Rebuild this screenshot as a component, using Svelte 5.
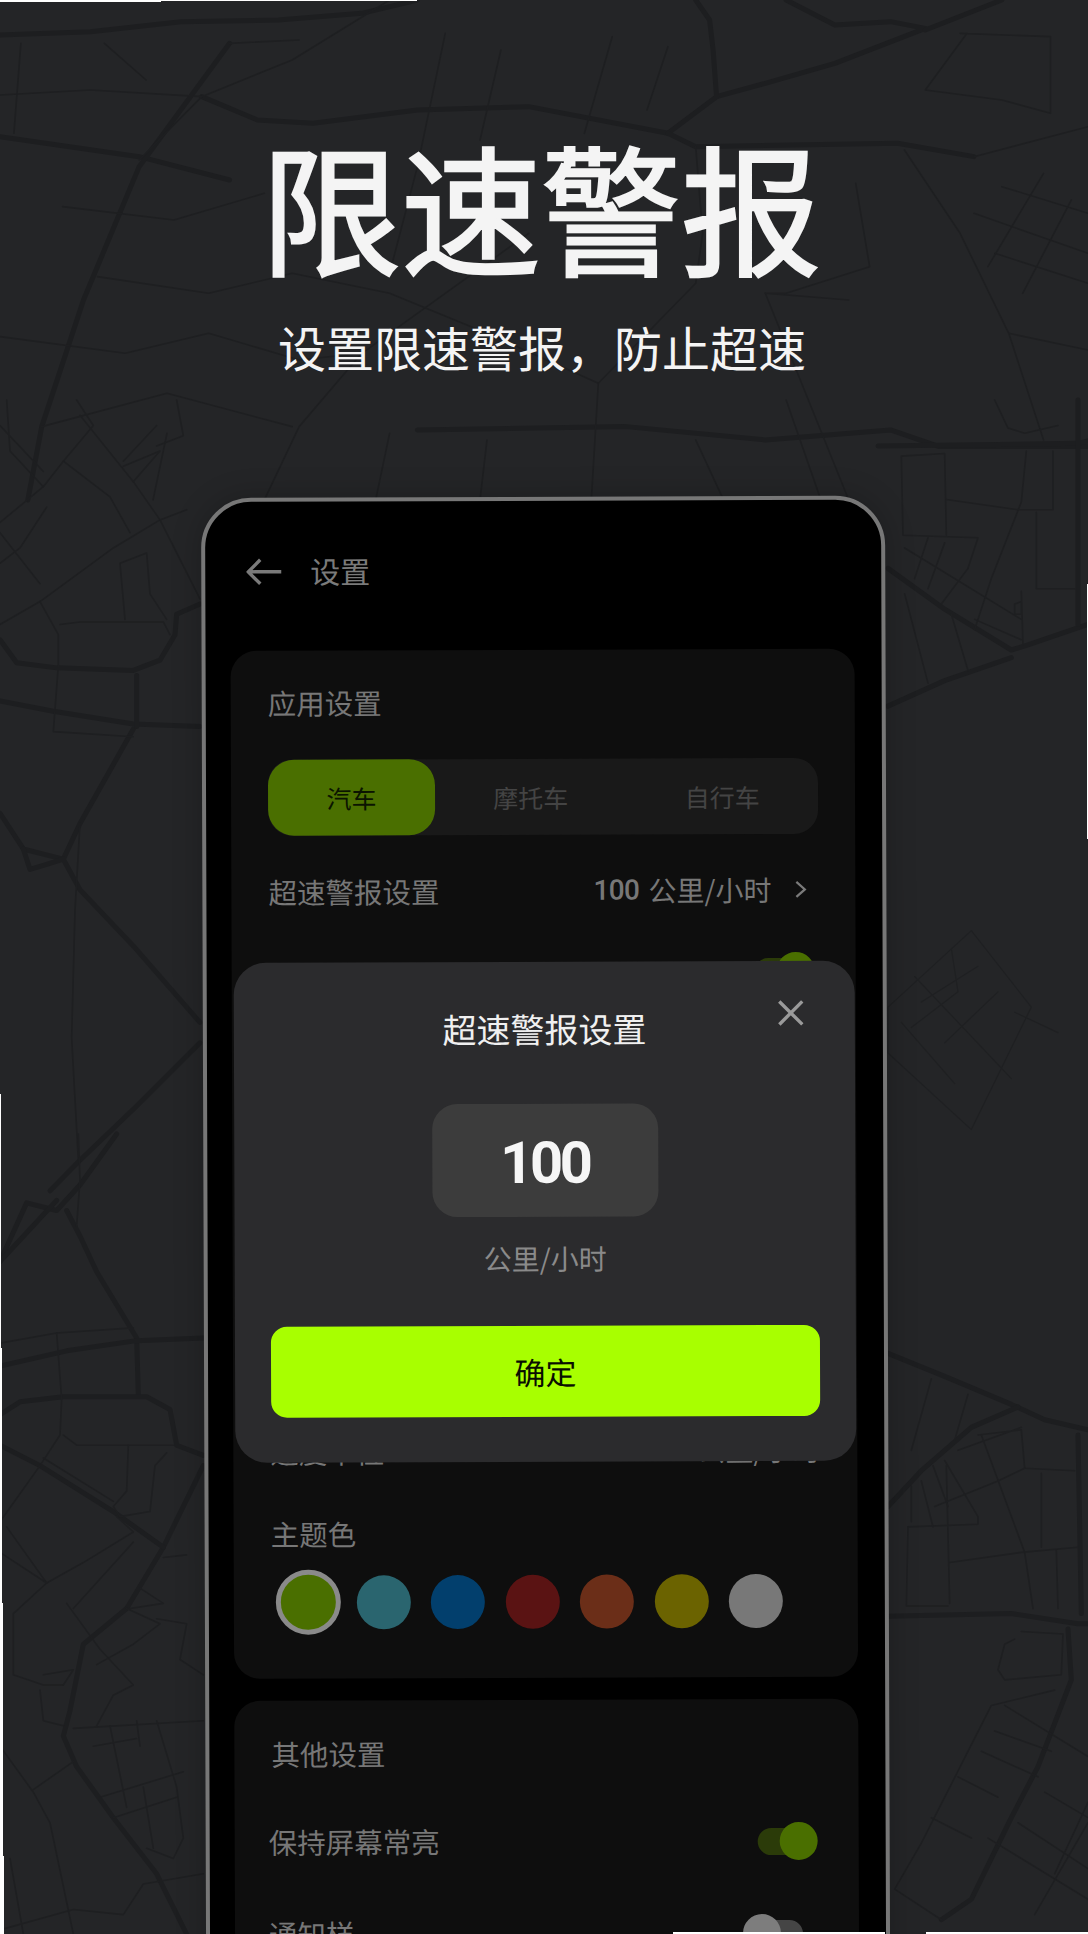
<script lang="ts">
  // swatches in the theme colour row, the first one is selected
  const swatches = ['#4a6f00', '#2a656f', '#023f6d', '#5a1313', '#6b2e18', '#6b6300', '#787878'];

  // road traces, read off separate crops: each group has its own scale
  const maps = [
    {
      t: 'scale(0.6957 0.3333)',
      thick: [
        'M0,105 L130,95 L260,65 L400,60 L520,40 L600,0',
        'M1130,0 L1200,75 L1280,65 L1330,85 L1200,190 L1100,250 L1030,290',
        'M1330,90 L1440,0',
        'M1000,0 L1020,60 L1025,150 L1030,290 L960,400 L760,320 L600,330 L450,370 L370,360 L290,290',
        'M0,410 L200,470 L330,540',
        'M960,400 L1000,440 L1290,430 L1400,470',
        'M600,1290 L900,1280 L1100,1320 L1280,1290 L1350,1340 L1564,1340',
        'M330,130 L200,500 L120,900 L60,1280 L40,1500'
      ],
      thin: [
        'M560,0 L420,180 L290,290 L200,480',
        'M0,285 L130,270 L290,290',
        'M30,130 L20,400 M150,130 L210,240 M330,130 L430,120',
        'M850,1500 L860,1150 L1000,850 L1010,700 L1000,440',
        'M380,1500 L430,1280 L520,1060 L640,880 L760,700',
        'M1130,1200 L1180,1500 M1100,880 L1220,1500',
        'M1300,450 L1380,700 L1450,1000 L1500,1320',
        'M1380,100 L1510,110 L1510,340 M1390,100 L1330,270 L1440,300 L1510,340',
        'M1400,470 L1564,380 M1440,560 L1564,640 M1400,640 L1564,760 M1430,760 L1564,850',
        'M1500,520 L1420,800 M1540,600 L1470,880 M1450,1000 L1564,1050',
        'M640,100 L600,500 L560,820 M720,150 L690,420 M880,110 L840,400 M960,140 L930,330',
        'M90,620 L250,660 L380,580 M140,830 L300,880 L420,820 L560,880 L700,1000 L860,1150',
        'M0,1010 L180,1060 L300,1000 L430,1080 L520,1060 M60,1280 L240,1180 L420,1280',
        'M1230,550 L1250,800 L1130,880 L1100,880 L1220,900',
        'M240,1300 L220,1500 M560,1300 L540,1500 M700,1320 L690,1500 M1000,1320 L1040,1500'
      ]
    },
    {
      t: 'translate(0 400) scale(0.3333 0.5102)',
      thick: [
        'M0,470 L50,515 L170,525 L400,530 L480,510 L525,460 L530,420 L600,400',
        'M0,590 L160,610 L400,635 L600,640',
        'M400,645 L240,830 L190,900 L130,890 L70,880 L0,810',
        'M70,880 L90,920 L140,910 L190,900 L240,960 L400,1070 L600,1220',
        'M600,1260 L400,1390 L240,1490 L150,1550',
        'M410,540 L410,640'
      ],
      thin: [
        'M0,440 L120,395 L340,290 L480,235',
        'M120,395 L175,460 L175,520 L160,650 L400,660',
        'M240,830 L225,1000 L215,1250 L235,1490',
        'M0,240 L130,170 L190,120 L330,190 L390,260',
        'M190,120 L280,50 L230,0',
        'M240,30 L400,160 L480,235 L600,390',
        'M0,320 L60,290 L140,210 M0,260 L120,360',
        'M360,320 L375,430 M360,320 L440,300 L450,380 L500,430',
        'M480,235 L560,215 M370,130 L480,100 L400,160',
        'M180,440 L240,435 L490,435 L510,460',
        'M0,50 L130,140 M20,0 L30,100 L130,170',
        'M470,50 L370,120 M530,0 L550,70 L470,90'
      ]
    },
    {
      t: 'translate(0 1134) scale(0.3333 0.5102)',
      thick: [
        'M0,250 L80,135 L170,150 L240,100 L350,0',
        'M0,250 L170,130',
        'M200,150 L240,200 L290,270 L410,400 L415,510',
        'M0,455 L200,425 L410,405 L610,400',
        'M0,550 L60,525 L190,515 L440,515 L510,540 L530,610 L610,630',
        'M610,650 L490,810 L380,930 L250,1000 L210,1130 L190,1180 L230,1240 L340,1340 L470,1450 L560,1568',
        'M0,610 L120,650 L340,740 L490,810'
      ],
      thin: [
        'M235,0 L240,90 L230,180',
        'M0,410 L170,390 L400,380',
        'M170,390 L185,520 L180,590 L120,650',
        'M190,590 L230,610 L520,610',
        'M385,610 L380,700 L340,730 L360,750 L450,740 L465,650 L500,625',
        'M130,635 L340,720 M120,650 L0,760',
        'M20,770 L140,880 L250,840 L400,780 L350,750',
        'M140,880 L40,940 L40,1060 L130,1080 L190,1080 M0,820 L140,880',
        'M220,930 L400,800',
        'M200,920 L300,1010 L400,1080 L340,1100 L290,1160',
        'M220,1165 L610,1150',
        'M330,1160 L380,1320 M410,1150 L420,1200 M280,1200 L410,1185',
        'M470,1150 L530,1280 L550,1380 L520,1420 L440,1400 M430,1280 L460,1400',
        'M300,1300 L550,1250 M340,1340 L530,1300',
        'M0,1200 L100,1290 L150,1350 L220,1568 M100,1285 L220,1230',
        'M30,1420 L70,1568 M0,1560 L220,1520 L370,1530 L430,1470 L610,1450',
        'M120,1090 L130,1150 L190,1160 M130,1060 L220,1050 L190,1080',
        'M470,950 L560,960 L540,1030 L610,1060',
        'M380,930 L480,960 L400,1000 L290,1040',
        'M420,890 L490,920 L390,930 M490,830 L560,825'
      ]
    },
    {
      t: 'translate(878 400) scale(0.3333 0.5102)',
      thick: [
        'M0,90 L600,85 L630,80',
        'M30,330 L200,410 L400,490 L450,480 L630,440',
        'M30,600 L200,550 L400,505',
        'M600,0 L600,440'
      ],
      thin: [
        'M350,0 L390,55 L440,65 L540,50',
        'M445,100 L430,200 L340,350 L290,450',
        'M70,110 L200,105 L205,265 M70,110 L75,265 L300,270 L270,330',
        'M205,195 L420,215 L525,215 M525,100 L525,215',
        'M475,220 L475,370 L590,370',
        'M80,290 L430,430 M150,270 L110,350 M200,280 L150,370 M270,330 L190,400',
        'M220,420 L270,530 M80,380 L150,555 M290,430 L430,470',
        'M430,375 L435,480 M410,400 L430,395 L430,420 L410,420 Z'
      ]
    },
    {
      t: 'translate(878 1134) scale(0.3333 0.5102)',
      thick: [
        'M30,430 L200,475 L400,530 L500,560 L630,580',
        'M30,730 L130,660 L280,575 L420,535',
        'M30,945 L400,940 L600,960 L630,960',
        'M600,590 L610,940',
        'M570,970 L580,1070 L480,1240 L400,1340 L280,1500 L190,1540'
      ],
      thin: [
        'M160,480 L100,620 M270,510 L230,600',
        'M300,590 L430,580 L440,655 L590,660 M240,620 L430,575',
        'M310,590 L440,820 L465,930',
        'M490,665 L490,810 M215,840 L430,820 L600,810',
        'M205,650 L215,920 M90,770 L300,765 L300,750 L200,640',
        'M130,680 L165,770 M165,650 L210,730 M100,690 L100,760',
        'M90,770 L85,925 L210,925',
        'M170,730 L360,680 L440,655',
        'M190,1540 L50,1480 L130,1390 L340,1120 L530,1090',
        'M410,990 L380,1000 L360,1050 L380,1070 L550,1060 L555,980 L430,975',
        'M540,930 L535,815',
        'M350,1170 L520,1210 M310,1210 L480,1260 M240,1260 L360,1300',
        'M160,1340 L280,1380 M330,1380 L630,1500 M420,1350 L630,1440 M500,1290 L630,1340',
        'M380,1120 L630,1220 M530,1450 L630,1310 M470,1530 L630,1350'
      ]
    }
  ];

  // faint block on the right of the phone
  const faint = 'M30,1190 L280,1040 L460,1190 L280,1430 L30,1280 Z M110,1130 L400,1330 M220,1075 L240,1160 L100,1230 M70,1220 L230,1340 M300,1110 L130,1180 M360,1160 L200,1260 M410,1200 L540,1240';

  // thin white slivers along the picture's edges
  const edges = [
    { x: 0, y: 0, w: 161, h: 2 },
    { x: 161, y: 0, w: 256, h: 1 },
    { x: 0, y: 1094, w: 1, h: 254 },
    { x: 0, y: 1348, w: 2, h: 255 },
    { x: 0, y: 1603, w: 3, h: 253 },
    { x: 0, y: 1856, w: 4, h: 78 },
    { x: 1087, y: 584, w: 1, h: 255 },
    { x: 673, y: 1932, w: 212, h: 2 },
    { x: 926, y: 1932, w: 162, h: 2 }
  ];
</script>

<div class="page">
  <svg class="map" width="1088" height="1934" viewBox="0 0 1088 1934" fill="none">
    {#each maps as m}
      <g transform={m.t}>
        {#each m.thick as d}
          <path {d} class="road thick" />
        {/each}
        {#each m.thin as d}
          <path {d} class="road thin" />
        {/each}
      </g>
    {/each}
    <g transform="translate(878 400) scale(0.3333 0.5102)">
      <path d={faint} class="road faint" />
    </g>
  </svg>

  <header class="hero">
    <h1>限速警报</h1>
    <p>设置限速警报，防止超速</p>
  </header>

  <div class="phone">
    <div class="topbar">
      <svg width="36" height="28" viewBox="0 0 36 28" fill="none" stroke="#7a7a7a" stroke-width="3.4">
        <path d="M14,2 L2,14 L14,26 M2,14 H35" />
      </svg>
      <span>设置</span>
    </div>

    <section class="card first">
      <div class="card-title">应用设置</div>
      <div class="segment">
        <div class="tab on">汽车</div>
        <div class="tab">摩托车</div>
        <div class="tab">自行车</div>
      </div>
      <div class="row first-row">
        <span>超速警报设置</span>
        <span class="value">
          <b>100</b><span>公里/小时</span>
          <svg width="13" height="19" viewBox="0 0 13 19" fill="none" stroke="#7a7a7a" stroke-width="2.2">
            <path d="M2,2 L10.5,9.5 L2,17" />
          </svg>
        </span>
      </div>
      <div class="row">
        <span></span>
        <div class="toggle"><i></i><em></em></div>
      </div>
      <div class="hidden-rows"></div>
      <div class="row">
        <span>速度单位</span>
        <span class="value">公里/小时</span>
      </div>
      <div class="card-title theme">主题色</div>
      <div class="swatches">
        {#each swatches as c, i}
          <div class="dot" class:picked={i === 0} style="background: {c}"></div>
        {/each}
      </div>
    </section>

    <section class="card second">
      <div class="card-title">其他设置</div>
      <div class="row tall">
        <span class="nudge">保持屏幕常亮</span>
        <div class="toggle"><i></i><em></em></div>
      </div>
      <div class="row tall">
        <span class="nudge">通知样</span>
        <div class="toggle off"><i></i><em></em></div>
      </div>
    </section>

    <div class="modal">
      <button class="close" aria-label="关闭">
        <svg width="26" height="26" viewBox="0 0 26 26" stroke="#9a9a9a" stroke-width="3.4">
          <path d="M1.5,1.5 L24.5,24.5 M24.5,1.5 L1.5,24.5" />
        </svg>
      </button>
      <div class="modal-title">超速警报设置</div>
      <div class="speed">100</div>
      <div class="unit">公里/小时</div>
      <button class="confirm">确定</button>
    </div>
  </div>

  {#each edges as e}
    <div class="edge" style="left: {e.x}px; top: {e.y}px; width: {e.w}px; height: {e.h}px"></div>
  {/each}
</div>

<style>
  :global(body) {
    margin: 0;
    background: #242527;
  }

  .page {
    position: relative;
    width: 1088px;
    height: 1934px;
    overflow: hidden;
    background: #242527;
    font-family: "Noto Sans CJK SC", "Noto Sans", sans-serif;
  }

  .map {
    position: absolute;
    left: 0;
    top: 0;
  }

  .road {
    vector-effect: non-scaling-stroke;
    stroke-linejoin: round;
    stroke-linecap: round;
  }

  .thick {
    stroke: #1d1e20;
    stroke-width: 5;
  }

  .thin {
    stroke: #1e1f21;
    stroke-width: 1.6;
  }

  .faint {
    stroke: #1f2022;
    stroke-width: 1.2;
  }

  .hero {
    position: relative;
    padding-top: 129px;
    height: 498px;
    box-sizing: border-box;
    text-align: center;
    color: #f4f4f4;
  }

  .hero h1 {
    margin: 0;
    font-size: 140px;
    line-height: 150px;
    font-weight: 400;
    -webkit-text-stroke: 2.5px #f4f4f4;
    transform: translateX(-3px);
  }

  .hero p {
    margin: 37px 0 0;
    font-size: 48px;
    line-height: 60px;
    font-weight: 400;
    transform: translateX(-2px);
  }

  .phone {
    position: relative;
    box-sizing: border-box;
    width: 684px;
    height: 1600px;
    margin-left: 201px;
    border: 4px solid #777;
    border-radius: 50px 50px 0 0;
    background: #000;
    box-shadow: 0 0 30px rgba(0, 0, 0, 0.22);
    transform: rotate(-0.2deg);
    transform-origin: 0 0;
  }

  .topbar {
    height: 140px;
    display: flex;
    align-items: center;
    gap: 28px;
    padding-left: 41px;
    color: #7a7a7a;
    font-size: 30px;
    margin-bottom: 9px;
  }

  .topbar span {
    margin-bottom: 2px;
  }

  .card {
    width: 624px;
    margin-left: 25px;
    box-sizing: border-box;
    padding: 32px 37px 0;
    background: #0e0e0e;
    border-radius: 26px;
    color: #777;
    font-size: 28.5px;
  }

  .card.first {
    height: 1028px;
  }

  .card.second {
    margin-top: 22px;
    height: 400px;
    padding-top: 33px;
  }

  .card-title {
    line-height: 40px;
  }

  .card-title.theme {
    margin-top: 21px;
  }

  .segment {
    display: flex;
    height: 76px;
    margin-top: 37px;
    border-radius: 24px;
    background: #191919;
  }

  .tab {
    flex: 1;
    display: flex;
    align-items: center;
    justify-content: center;
    font-size: 25px;
    color: #444;
  }

  .tab.on {
    flex: 0 0 167px;
    background: #4a6f00;
    color: #0b1400;
    border-radius: 26px;
  }

  .row {
    display: flex;
    align-items: center;
    justify-content: space-between;
    height: 80px;
  }

  .row > span {
    margin-bottom: 4px;
  }

  .row.first-row {
    margin-top: 17px;
  }

  .row.tall {
    height: 92px;
  }

  .card.second .card-title + .row {
    margin-top: 23px;
  }

  .nudge {
    margin-left: -3px;
  }

  .hidden-rows {
    height: 400px;
  }

  .value {
    display: flex;
    align-items: center;
    gap: 9px;
    font-size: 28px;
  }

  .value b {
    font-family: Roboto, sans-serif;
    font-weight: 500;
    font-size: 28px;
    letter-spacing: -0.6px;
  }

  .value svg {
    margin: 0 11px 0 14px;
  }

  .swatches {
    display: flex;
    align-items: center;
    gap: 20.5px;
    margin-top: 16px;
    padding-left: 5px;
  }

  .dot {
    width: 54px;
    height: 54px;
    border-radius: 50%;
  }

  .dot.picked {
    box-sizing: border-box;
    width: 65px;
    height: 65px;
    margin-right: -5px;
    border: 5px solid #8a8a8a;
  }

  .toggle {
    position: relative;
    width: 60px;
    height: 38px;
    margin-right: 4px;
  }

  .toggle i {
    position: absolute;
    left: 0;
    right: 10px;
    top: 6px;
    bottom: 5px;
    border-radius: 14px;
    background: #2b3b09;
  }

  .toggle em {
    position: absolute;
    right: 0;
    top: 0;
    width: 38px;
    height: 38px;
    border-radius: 50%;
    background: #4a6f00;
  }

  .toggle.off {
    margin-right: 19px;
  }

  .toggle.off i {
    left: 12px;
    right: 0;
    background: #454545;
  }

  .toggle.off em {
    left: 0;
    right: auto;
    background: #7d7d7d;
  }

  .modal {
    position: absolute;
    left: 27px;
    top: 461px;
    width: 621px;
    height: 500px;
    box-sizing: border-box;
    padding-top: 45px;
    display: flex;
    flex-direction: column;
    align-items: center;
    background: #2b2b2d;
    border-radius: 32px;
  }

  .close {
    position: absolute;
    top: 39px;
    right: 51px;
    width: 26px;
    height: 26px;
    padding: 0;
    border: 0;
    background: none;
    line-height: 0;
  }

  .modal-title {
    font-size: 34px;
    line-height: 44px;
    color: #f0f0f0;
  }

  .speed {
    box-sizing: border-box;
    width: 226px;
    height: 113px;
    margin-top: 53px;
    padding-top: 4px;
    display: flex;
    align-items: center;
    justify-content: center;
    border-radius: 25px;
    background: #3c3c3c;
    color: #f6f6f6;
    font-family: Roboto, sans-serif;
    font-weight: 700;
    font-size: 58px;
    letter-spacing: -3.5px;
  }

  .unit {
    margin-top: 21px;
    font-size: 28px;
    line-height: 40px;
    color: #8a8a8a;
  }

  .confirm {
    width: 549px;
    height: 91px;
    margin-top: 48px;
    padding: 0;
    border: 0;
    border-radius: 16px;
    background: #a8ff00;
    color: #0a0f00;
    font-family: inherit;
    font-size: 31px;
  }

  .edge {
    position: absolute;
    background: #fff;
  }
</style>
